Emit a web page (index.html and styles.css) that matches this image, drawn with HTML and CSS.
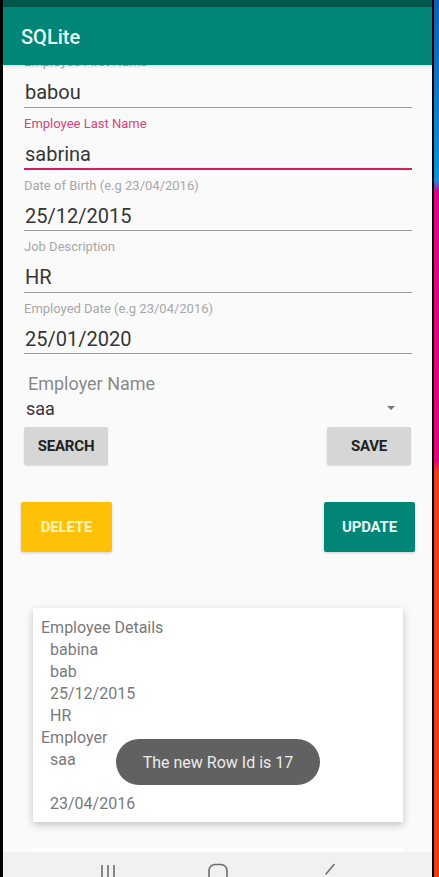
FILE: index.html
```html
<!DOCTYPE html>
<html>
<head>
<meta charset="utf-8">
<link rel="stylesheet" href="styles.css">
</head>
<body>
<div class="bezel-left"></div>
<div class="screen">
  <div class="statusbar"></div>
  <div class="toolbar"><span class="title">SQLite</span></div>
  <div class="content">
    <div class="form">
      <div class="field">
        <div class="label">Employee First Name</div>
        <div class="value">babou</div>
        <div class="line"></div>
      </div>
      <div class="field active">
        <div class="label">Employee Last Name</div>
        <div class="value">sabrina</div>
        <div class="line"></div>
      </div>
      <div class="field">
        <div class="label">Date of Birth (e.g 23/04/2016)</div>
        <div class="value">25/12/2015</div>
        <div class="line"></div>
      </div>
      <div class="field">
        <div class="label">Job Description</div>
        <div class="value">HR</div>
        <div class="line"></div>
      </div>
      <div class="field">
        <div class="label">Employed Date (e.g 23/04/2016)</div>
        <div class="value">25/01/2020</div>
        <div class="line"></div>
      </div>
    </div>
    <div class="spinner">
      <div class="spinner-label">Employer Name</div>
      <div class="spinner-row">
        <span class="spinner-value">saa</span>
        <span class="caret"></span>
      </div>
    </div>
    <div class="btn-row row1">
      <div class="btn grey">SEARCH</div>
      <div class="btn grey">SAVE</div>
    </div>
    <div class="btn-row row2">
      <div class="btn big amber">DELETE</div>
      <div class="btn big teal">UPDATE</div>
    </div>
    <div class="card">
      <div class="card-line">Employee Details</div>
      <div class="card-line sub">babina</div>
      <div class="card-line sub">bab</div>
      <div class="card-line sub">25/12/2015</div>
      <div class="card-line sub">HR</div>
      <div class="card-line">Employer</div>
      <div class="card-line sub">saa</div>
      <div class="card-line sub">&nbsp;</div>
      <div class="card-line sub">23/04/2016</div>
    </div>
    <div class="card next"></div>
  </div>
  <div class="navbar">
    <svg class="nav-icon" width="20" height="14" viewBox="0 0 20 14"><path d="M5 2V14M11 2V14M17 2V14" stroke="#6e6e6e" stroke-width="1.6" fill="none"/></svg>
    <svg class="nav-icon" width="22" height="14" viewBox="0 0 22 14"><rect x="2" y="1.5" width="18" height="18" rx="6" stroke="#6e6e6e" stroke-width="1.6" fill="none"/></svg>
    <svg class="nav-icon" width="16" height="14" viewBox="0 0 16 14"><path d="M12 1.5L4 11" stroke="#6e6e6e" stroke-width="1.6" fill="none" stroke-linecap="round"/></svg>
  </div>
  <div class="toast">The new Row Id is 17</div>
</div>
<div class="bezel-right"></div>
<div class="wallpaper"></div>
</body>
</html>
```

FILE: styles.css
```css
html, body {
  margin: 0;
  padding: 0;
}
body {
  width: 439px;
  height: 877px;
  overflow: hidden;
  background: #000;
  display: flex;
  font-family: Roboto, "Liberation Sans", sans-serif;
}
.bezel-left {
  width: 3px;
  flex: none;
}
.bezel-right {
  width: 2px;
  flex: none;
}
.wallpaper {
  width: 5px;
  flex: none;
  background: linear-gradient(180deg, #0a5fb8 0px, #1290dc 180px, #e0008a 192px, #e6007a 460px, #e8421a 472px, #e6400f 877px);
}
.screen {
  width: 429px;
  flex: none;
  height: 877px;
  background: #fafafa;
  display: flex;
  flex-direction: column;
  position: relative;
  overflow: hidden;
}
.statusbar {
  height: 7px;
  flex: none;
  background: #00574b;
}
.toolbar {
  height: 58px;
  flex: none;
  background: #008577;
  display: flex;
  align-items: center;
  padding-left: 18px;
  position: relative;
  z-index: 2;
  box-shadow: 0 1px 3px rgba(0, 0, 0, 0.18);
}
.title {
  color: #e4fbf7;
  font-size: 20px;
  font-weight: 500;
  margin-top: 2px;
}
.content {
  flex: 1;
  overflow: hidden;
  display: flex;
  flex-direction: column;
}
.form {
  margin-top: -10.67px;
  padding: 0 20px 0 21px;
}
.field {
  margin-bottom: 8.17px;
}
.field.active {
  margin-bottom: 7.67px;
}
.label {
  font-size: 13px;
  line-height: 16px;
  height: 16px;
  color: #a8a8a8;
}
.active .label {
  color: #d6457b;
}
.value {
  margin-top: 9px;
  font-size: 20px;
  line-height: 26px;
  height: 26px;
  color: #363636;
  padding-left: 1px;
}
.line {
  margin-top: 1.5px;
  height: 1px;
  background: #9a9a9a;
}
.active .line {
  margin-top: 1px;
  height: 2px;
  background: #d81b60;
}
.spinner {
  padding: 10px 37px 0 23px;
}
.spinner-label {
  font-size: 18px;
  line-height: 22px;
  color: #8a8a8a;
  padding-left: 2px;
}
.spinner-row {
  display: flex;
  align-items: center;
  justify-content: space-between;
  margin-top: 3px;
}
.spinner-value {
  font-size: 18px;
  line-height: 22px;
  color: #363636;
}
.caret {
  width: 0;
  height: 0;
  border-left: 4.5px solid transparent;
  border-right: 4.5px solid transparent;
  border-top: 4.5px solid #757575;
  margin-top: -1px;
}
.btn-row {
  display: flex;
  justify-content: space-between;
}
.row1 {
  margin-top: 7px;
  padding: 0 21px 0 21px;
}
.row2 {
  margin-top: 37px;
  padding: 0 17px 0 18px;
}
.btn {
  display: flex;
  align-items: center;
  justify-content: center;
  font-size: 15px;
  font-weight: 700;
  letter-spacing: -0.2px;
  border-radius: 2px;
}
.grey {
  width: 84px;
  height: 38px;
  background: #d6d6d6;
  color: #222;
  box-shadow: 0 1px 2px rgba(0, 0, 0, 0.12);
}
.big {
  width: 91px;
  height: 50px;
  box-shadow: 0 1px 3px rgba(0, 0, 0, 0.18);
}
.amber {
  background: #ffc107;
  color: #fff4b8;
}
.teal {
  background: #008577;
  color: #e4f7f3;
}
.card {
  margin: 56px 29px 0 30px;
  background: #fff;
  padding: 9px 8px 7px 8px;
  box-shadow: 0 3px 8px rgba(0, 0, 0, 0.22);
  flex: none;
}
.card-line {
  font-size: 16px;
  line-height: 22px;
  color: #7a7a7a;
}
.card-line.sub {
  padding-left: 9px;
}
.card.next {
  margin-top: 26px;
  height: 40px;
  padding: 0;
  box-shadow: none;
}
.navbar {
  position: absolute;
  left: 0;
  right: 0;
  bottom: 0;
  height: 25px;
  background: #f1f1f1;
  z-index: 3;
}
.nav-icon {
  position: absolute;
  bottom: 0;
}
.nav-icon:nth-child(1) { left: 94px; }
.nav-icon:nth-child(2) { left: 204px; }
.nav-icon:nth-child(3) { left: 319px; }
.toast {
  position: absolute;
  left: 113px;
  top: 739px;
  width: 204px;
  height: 46px;
  border-radius: 23px;
  background: #616161;
  color: #ececec;
  font-size: 16px;
  display: flex;
  align-items: center;
  justify-content: center;
  z-index: 4;
}
```
